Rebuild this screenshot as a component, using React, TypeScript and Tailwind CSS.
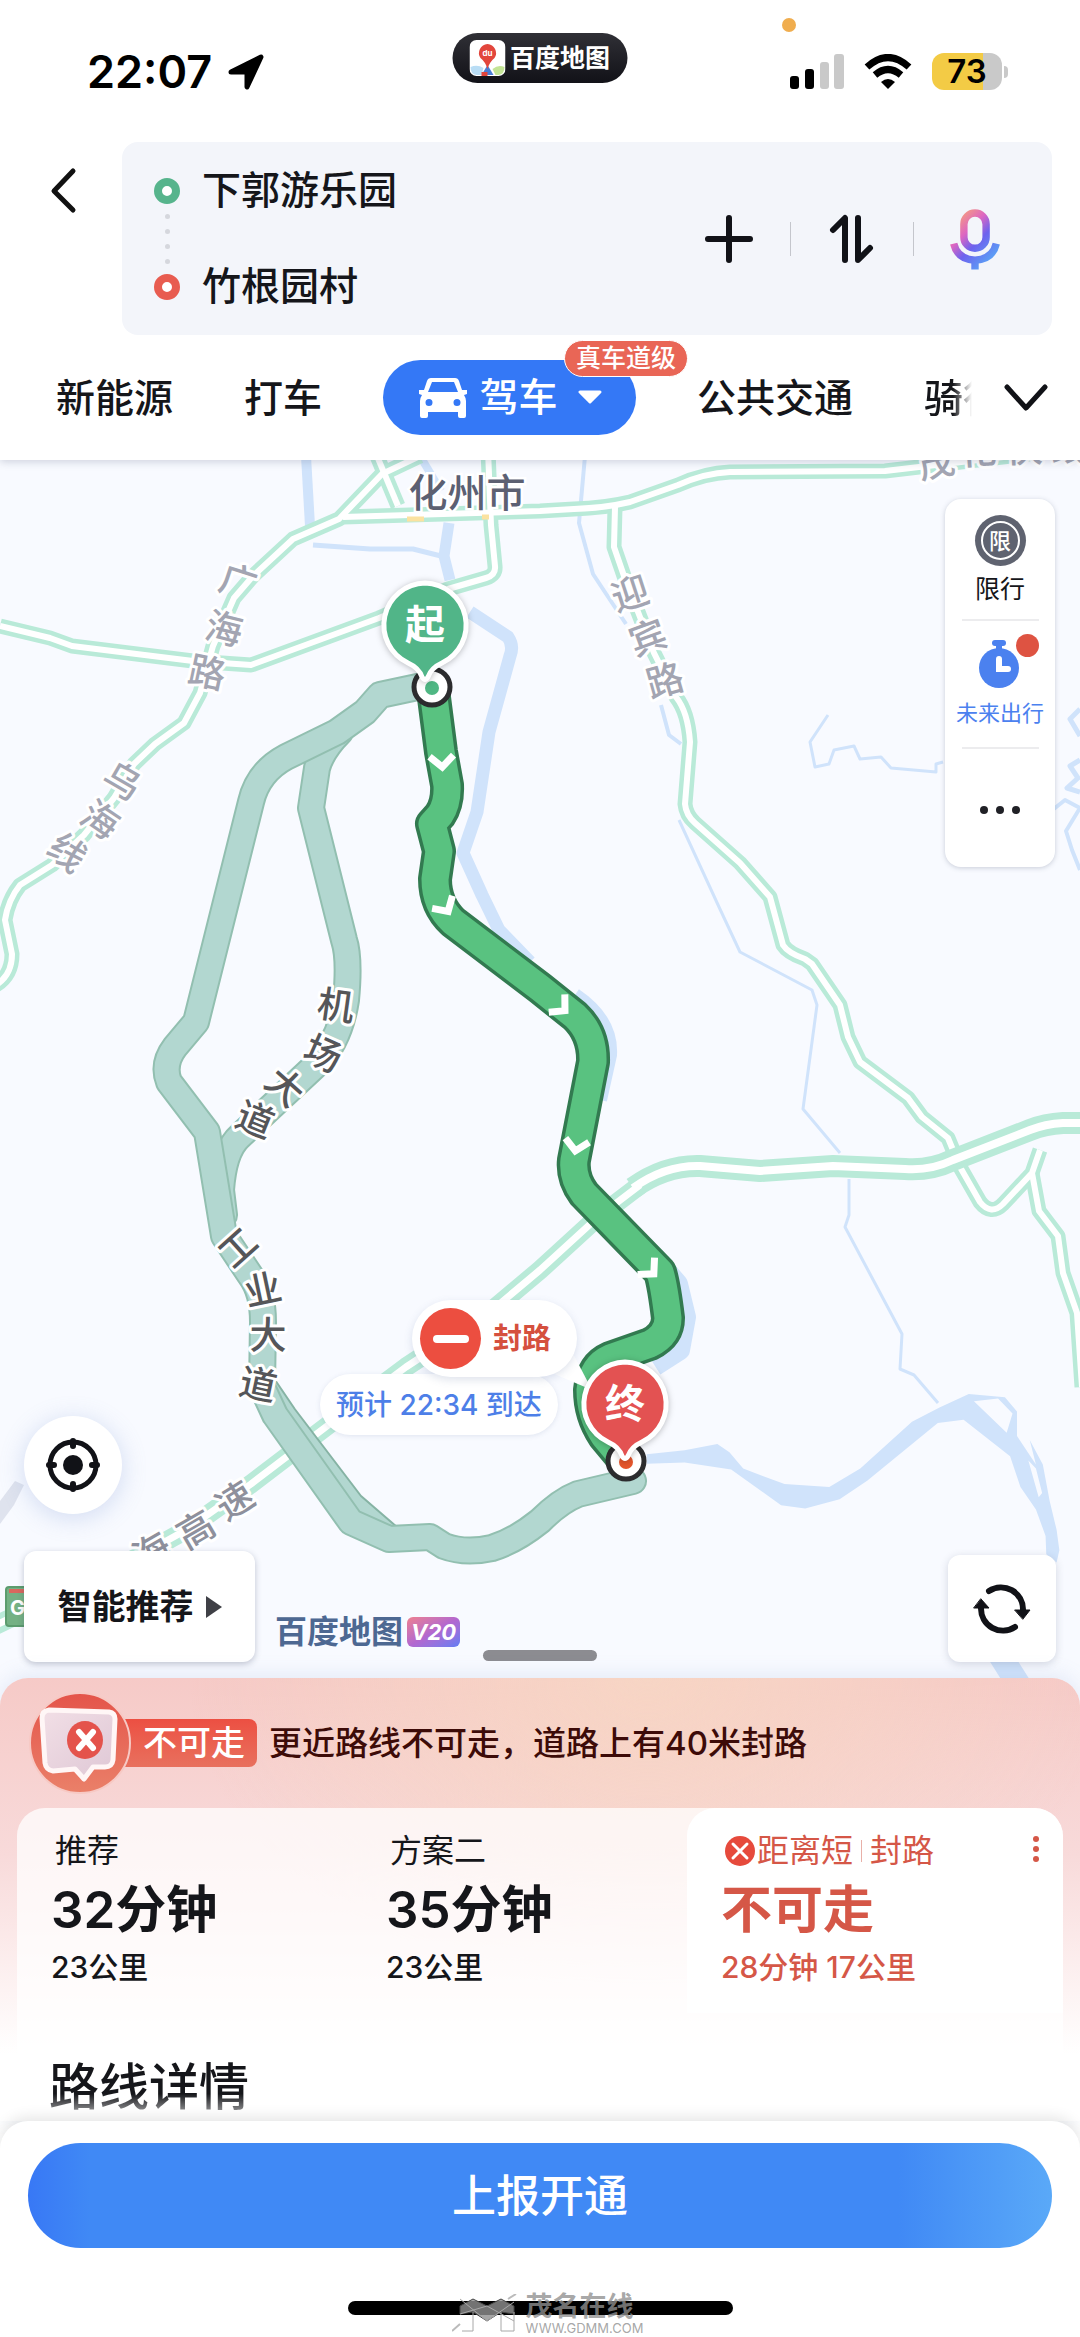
import React from "react";

type Label = { ch: string; x: number; y: number; r: number };

const ROADS = [
  "M0 626 L50 638 L72 646 L193 661 L251 665 L379 618 L448 589 L486 578 Q496 575 495 566 L491 525 L488 450",
  "M420 456 L382 474 L339 519 L293 539 L253 576 L234 598 L213 646 L200 693 L184 723 L155 744 L134 764 L114 798 L84 835 L52 865 L20 885 Q8 900 5 920 L12 954 Q12 975 -4 985",
  "M377 456 L398 506",
  "M343 517 L540 511 L574 509 Q605 508 630 502 L678 485 Q705 473 730 472 L885 471 L919 467 L1080 448",
  "M615 507 L614 547 L624 576 L654 653 L676 697 Q688 712 690 742 L685 804 Q686 815 695 823 L740 863 L770 897 L783 945 Q788 953 805 959 L812 964 L840 1005 L848 1037 L860 1062 L908 1098 L922 1117 L948 1138 L960 1167 L980 1202 Q991 1216 1003 1204 L1032 1173 L1040 1150",
  "M1032 1173 L1039 1211 L1058 1236 L1063 1273 L1077 1313 L1082 1387",
];
const HIGHWAY_WEST = "M640 1185 L598 1217 L540 1270 L490 1312 L406 1367 L331 1423 L251 1484 L186 1530 L100 1578 L34 1607 L-6 1626";
const HIGHWAY_EAST =
  "M1090 1123 L1063 1123 Q1045 1124 1030 1130 L953 1160 Q930 1171 905 1169 L833 1166 L760 1171 L700 1166 Q665 1165 633 1188";

const STREAMS: [string, number][] = [
  ["M306 456 L310 526", 10],
  ["M313 545 L370 549 L413 549 L441 556", 5],
  ["M449 523 L444 556 L450 580", 11],
  ["M420 456 L441 491", 8],
  ["M470 612 L508 637 Q514 646 510 656 L489 732 L477 812 L463 853 L482 895 L499 930 L530 962", 13],
  ["M575 995 Q612 1020 610 1055 L600 1100", 14],
  ["M654 1256 L678 1284 L686 1317 L680 1350 L655 1366", 20],
  ["M585 456 L579 523 L593 574 L626 624", 4],
  ["M661 705 L669 735 L681 744", 4],
  ["M679 820 L719 907 L740 952 L812 990 L817 1005 L803 1109 L840 1153", 3],
  ["M849 1179 L849 1215 L845 1227 L902 1334 L900 1369 L914 1375 L938 1403", 3],
  ["M828 715 L810 742 L815 767 L829 764 L834 750 L854 746 L860 759 L881 757 L891 768 L936 772 L936 764 L943 762", 3],
  ["M1080 709 L1070 719 L1080 736 M1080 760 L1070 766 L1078 778 L1067 788 L1080 792", 5],
  ["M1050 812 L1065 800 L1080 808 L1066 831 L1072 850 L1080 870", 4],
  ["M1000 1655 L1022 1690", 24],
];

const ALT_MAIN =
  "M427 685 L380 695 L365 712 L337 732 L286 757 Q258 772 251 802 L196 1022 L175 1047 Q162 1064 169 1082 L207 1132 L224 1236 L250 1275 Q263 1292 263 1322 L262 1387 L275 1415 L351 1522 L389 1539 L430 1537 L444 1546 Q465 1554 492 1548 Q515 1541 540 1521 Q560 1501 578 1494 L633 1481";
const ALT_SIDE = "M340 732 Q322 750 317 768 L311 808 L344 940 Q350 958 346 1000 Q340 1040 317 1064 L240 1136 Q224 1150 221 1190 L224 1215";
const ALT_INNER = "M266 1388 L285 1416 L352 1504 L389 1536";
const ROUTE =
  "M433 690 L441 752 L447 785 Q448 803 440 815 L432 824 L439 851 L435 879 Q435 905 453 922 L540 988 L575 1016 Q594 1034 593 1062 L574 1160 Q572 1178 584 1194 L660 1272 Q664 1285 668 1318 Q668 1335 650 1344 L610 1358 Q592 1366 590 1390 Q590 1415 604 1436 L624 1460";

const CHEVRONS: [number, number, number][] = [
  [442, 763, -4],
  [446, 908, -32],
  [562, 1008, -48],
  [576, 1147, 10],
  [651, 1271, -45],
];

const MINOR: Label[] = [
  { ch: "广", x: 238, y: 582, r: 18 },
  { ch: "海", x: 224, y: 629, r: 14 },
  { ch: "路", x: 207, y: 673, r: 12 },
  { ch: "乌", x: 122, y: 781, r: 30 },
  { ch: "海", x: 100, y: 820, r: 34 },
  { ch: "线", x: 67, y: 853, r: 38 },
  { ch: "迎", x: 630, y: 594, r: -18 },
  { ch: "宾", x: 648, y: 638, r: -20 },
  { ch: "路", x: 665, y: 681, r: -16 },
  { ch: "茂", x: 936, y: 463, r: -12 },
  { ch: "化", x: 978, y: 451, r: -4 },
  { ch: "快", x: 1024, y: 449, r: -2 },
  { ch: "线", x: 1069, y: 448, r: -2 },
];
const HIGHWAY_NAME: Label[] = [
  { ch: "海", x: 152, y: 1552, r: -30 },
  { ch: "高", x: 196, y: 1530, r: -30 },
  { ch: "速", x: 235, y: 1501, r: -32 },
];
const MAJOR: Label[] = [
  { ch: "机", x: 336, y: 1006, r: 8 },
  { ch: "场", x: 323, y: 1054, r: 24 },
  { ch: "大", x: 285, y: 1087, r: 42 },
  { ch: "道", x: 255, y: 1120, r: 22 },
  { ch: "工", x: 238, y: 1248, r: -42 },
  { ch: "业", x: 263, y: 1290, r: -12 },
  { ch: "大", x: 268, y: 1336, r: 0 },
  { ch: "道", x: 258, y: 1385, r: 12 },
];

function RoadName({ items, color }: { items: Label[]; color: string }) {
  return (
    <g fill={color} stroke="#fff" strokeWidth="6" strokeLinejoin="round" paintOrder="stroke" fontSize="37" fontWeight="500" textAnchor="middle">
      {items.map((l, i) => (
        <text key={i} transform={`translate(${l.x} ${l.y}) rotate(${l.r})`} y="13">
          {l.ch}
        </text>
      ))}
    </g>
  );
}

type PinProps = { x: number; y: number; ringX: number; ringY: number; color: string; text: string; dot: string };

function Pin({ x, y, ringX, ringY, color, text, dot }: PinProps) {
  return (
    <g>
      <circle cx={ringX} cy={ringY} r="18" fill="#fff" stroke="#2c2c2e" strokeWidth="5" />
      <circle cx={ringX} cy={ringY + 1} r="7" fill={dot} />
      <g transform={`translate(${x} ${y})`}>
        <path
          d="M0 -42 A42 42 0 0 1 17 38 Q6 43 3 52 Q0 57 -3 52 Q-6 43 -17 38 A42 42 0 0 1 0 -42Z"
          fill={color}
          stroke="#fff"
          strokeWidth="5"
          className="drop-shadow-[0_1px_3px_rgba(0,0,0,0.25)]"
        />
        <text y="14" fontSize="40" fontWeight="700" fill="#fff" textAnchor="middle">
          {text}
        </text>
      </g>
    </g>
  );
}

function MapCanvas() {
  return (
    <svg viewBox="0 460 1080 1246" preserveAspectRatio="xMidYMin slice" className="absolute inset-0 h-full w-full" aria-label="路线地图" role="img">
      <g fill="none" stroke="#d0e3fb" strokeLinejoin="round">
        {STREAMS.map(([d, w]) => (
          <path key={d} d={d} strokeWidth={w} />
        ))}
      </g>
      <g transform="translate(540 1040) scale(.3444 .4082)">
        <path
          fill="#d0e3fb"
          fillRule="evenodd"
          d="M310 1015 L420 1005 L515 990 L550 1010 L590 1050 L710 1088 L840 1095 L930 1050 L1080 935 L1160 900 L1245 867 L1350 875 L1385 910 L1385 970 L1440 1040 L1422 980 L1460 1040 L1480 1130 L1500 1200 L1508 1250 L1500 1280 L1470 1260 L1468 1215 L1440 1150 L1395 1095 L1365 1020 L1230 930 L1155 938 L950 1080 L870 1125 L770 1148 L700 1140 L555 1052 L420 1035 L310 1038Z M1260 885 L1330 878 L1372 915 L1355 962Z M1418 1030 L1440 1050 L1458 1110 L1448 1120Z"
        />
      </g>
      <path d="M0 1501 L15 1481 L24 1485 L14 1505 L0 1524Z" fill="#dfe3ee" />

      <g fill="none" strokeLinejoin="round">
        {ROADS.map((d) => (
          <path key={d} d={d} stroke="#b9ead8" strokeWidth="15" />
        ))}
        {ROADS.map((d) => (
          <path key={d} d={d} stroke="#fff" strokeWidth="6" />
        ))}
        <path d={HIGHWAY_WEST} stroke="#b9ead8" strokeWidth="19" />
        <path d={HIGHWAY_EAST} stroke="#b9ead8" strokeWidth="22" />
        <path d={HIGHWAY_WEST} stroke="#fff" strokeWidth="7" />
        <path d={HIGHWAY_EAST} stroke="#fff" strokeWidth="8" />
        <path d="M407 519 H424 M482 517 H489" stroke="#fbe2a0" strokeWidth="5" />
      </g>

      <g fill="none" strokeLinejoin="round" strokeLinecap="round">
        <path d={ALT_SIDE} stroke="#92bfb0" strokeWidth="28" />
        <path d={ALT_SIDE} stroke="#b2d7d0" strokeWidth="24" />
        <path d={ALT_INNER} stroke="#86b3a4" strokeWidth="26" />
        <path d={ALT_INNER} stroke="#b2d7d0" strokeWidth="22" />
        <path d={ALT_MAIN} stroke="#92bfb0" strokeWidth="28" />
        <path d={ALT_MAIN} stroke="#b2d7d0" strokeWidth="24" />
        <path d={ROUTE} stroke="#327a50" strokeWidth="34" />
        <path d={ROUTE} stroke="#59c280" strokeWidth="27" />
      </g>
      <g fill="none" stroke="#fff" strokeWidth="7">
        {CHEVRONS.map(([x, y, r]) => (
          <path key={x} transform={`translate(${x} ${y}) rotate(${r})`} d="M-12 -7 L0 4 L12 -7" />
        ))}
      </g>

      <RoadName items={MINOR} color="#a3a5b2" />
      <RoadName items={HIGHWAY_NAME} color="#8e909c" />
      <RoadName items={MAJOR} color="#555659" />
      <text x="467" y="507" fontSize="39" fontWeight="500" textAnchor="middle" fill="#5c6072" stroke="#fff" strokeWidth="5" paintOrder="stroke">
        化州市
      </text>

      <rect x="6" y="1587" width="40" height="39" rx="3" fill="#74b184" stroke="#5c9c6e" strokeWidth="2" />
      <path d="M9 1591 H46" stroke="#d9685e" strokeWidth="4" />
      <text x="10" y="1615" fontSize="20" fontWeight="700" fill="#fff">
        G
      </text>
      <path d="M568 1344 L592 1390 L545 1370Z" fill="#fff" />
      <Pin x={425} y={625} ringX={432} ringY={687} color="#51b588" text="起" dot="#4fb783" />
      <Pin x={625} y={1404} ringX={626} ringY={1461} color="#e35252" text="终" dot="#e5562c" />
    </svg>
  );
}

function StatusBar() {
  return (
    <div className="relative flex h-[142px] items-start justify-between pr-[72px] pl-[87px]">
      <div className="mt-[48px] flex items-center gap-4">
        <span className="text-[45px] leading-[48px] font-semibold text-black">22:07</span>
        <svg viewBox="0 0 36 36" className="size-9" aria-hidden="true">
          <path d="M33 3 L19 33 V18 H3Z" fill="#000" stroke="#000" strokeWidth="5" strokeLinejoin="round" />
        </svg>
      </div>
      <div className="absolute top-[33px] left-1/2 flex h-[50px] w-[175px] -translate-x-1/2 items-center justify-center gap-1 rounded-full bg-linear-to-b from-[#303036] to-[#121218]">
        <svg viewBox="0 0 36 36" className="size-9" aria-hidden="true">
          <rect width="36" height="36" rx="7" fill="#fff" />
          <path d="M1 27 Q8 24 14 28 L12 35 H7 Q1 34 1 27Z" fill="#b9ddf5" />
          <path d="M35 27 Q29 24 23 29 L26 35 H29 Q35 34 35 27Z" fill="#c3e495" />
          <path d="M18 25 L24 35 H12Z" fill="#4a7fd6" />
          <path d="M12 32 H18 V36 H12Z" fill="#e2463c" />
          <path d="M18 4 A9 9 0 0 1 25 18 Q20 22 18 29 Q16 22 11 18 A9 9 0 0 1 18 4Z" fill="#e2463c" />
          <text x="18" y="16" fontSize="8" fontWeight="700" textAnchor="middle" fill="#fff">
            du
          </text>
        </svg>
        <span className="text-[25px] leading-[28px] font-bold text-white">百度地图</span>
      </div>
      <span className="absolute top-[18px] left-[782px] size-[14px] rounded-full bg-[#f0ad4e]" />
      <div className="mt-[53px] flex items-center">
        <svg viewBox="0 0 54 35" className="h-[35px] w-[54px]" aria-hidden="true">
          <rect y="22" width="9" height="13" rx="3" />
          <rect x="15" y="15" width="9" height="20" rx="3" />
          <rect x="30" y="8" width="9" height="27" rx="3" fill="#c9c9c9" />
          <rect x="44" width="10" height="35" rx="3" fill="#c9c9c9" />
        </svg>
        <svg viewBox="0 0 48 36" className="ml-5 h-[36px] w-[48px]" fill="none" stroke="#000" strokeWidth="7" aria-hidden="true">
          <path d="M3 13 Q24 -6 45 13" />
          <path d="M11 21 Q24 10 37 21" />
          <path d="M24 35 L17 28 Q24 22 31 28Z" fill="#000" stroke="none" />
        </svg>
        <div className="ml-5 flex h-[37px] w-[70px] items-center justify-center rounded-xl bg-linear-to-r from-[#f3cb45] from-73% to-[#c9c9c9] to-73% text-[33px] leading-[37px] font-semibold text-black">
          73
        </div>
        <span className="ml-0.5 h-3 w-1 rounded-r-full bg-[#c9c9c9]" />
      </div>
    </div>
  );
}

function RouteFields() {
  return (
    <div className="flex items-start pr-7 pl-[42px]">
      <button aria-label="返回" className="mt-6 flex h-12 w-[80px] items-center">
        <svg viewBox="0 0 44 48" className="h-12 w-11" fill="none" stroke="#111" strokeWidth="5" strokeLinecap="round" strokeLinejoin="round">
          <path d="M31 5 L12 25 L31 44" />
        </svg>
      </button>
      <div className="flex h-[193px] flex-1 items-center rounded-2xl bg-[#f3f5fa] pr-[52px] pl-8">
        <div className="flex flex-col items-center">
          <span className="size-[26px] rounded-full border-8 border-[#56b48c] bg-white" />
          <span className="flex h-[70px] flex-col items-center justify-evenly">
            <i className="size-[5px] rounded-full bg-[#d5d7dd]" />
            <i className="size-[5px] rounded-full bg-[#d5d7dd]" />
            <i className="size-[5px] rounded-full bg-[#d5d7dd]" />
            <i className="size-[5px] rounded-full bg-[#d5d7dd]" />
          </span>
          <span className="size-[26px] rounded-full border-8 border-[#e85c50] bg-white" />
        </div>
        <div className="ml-[22px] flex min-w-0 flex-1 flex-col gap-10">
          <input aria-label="起点" defaultValue="下郭游乐园" className="h-14 w-full bg-transparent text-[39px] font-medium text-[#15161a] outline-none" />
          <input aria-label="终点" defaultValue="竹根园村" className="h-14 w-full bg-transparent text-[39px] font-medium text-[#15161a] outline-none" />
        </div>
        <button aria-label="添加途经点">
          <svg viewBox="0 0 50 50" className="size-[50px]" stroke="#111217" strokeWidth="6" strokeLinecap="round">
            <path d="M25 4 V46 M4 25 H46" />
          </svg>
        </button>
        <span className="mx-9 h-[34px] w-px bg-[#c4c6cc]" />
        <button aria-label="交换起终点">
          <svg viewBox="0 0 50 50" className="size-[50px]" fill="none" stroke="#111217" strokeWidth="6" strokeLinecap="round" strokeLinejoin="round">
            <path d="M6 16 L18 4 V46 M31 4 V46 L43 34" />
          </svg>
        </button>
        <span className="mx-9 h-[34px] w-px bg-[#c4c6cc]" />
        <button aria-label="语音输入">
          <svg viewBox="0 0 54 66" className="h-[66px] w-[50px]" fill="none" stroke="url(#mic)" strokeWidth="8">
            <defs>
              <linearGradient id="mic" x1="4" y1="10" x2="46" y2="52" gradientUnits="userSpaceOnUse">
                <stop offset="0.1" stopColor="#f0908f" />
                <stop offset="0.35" stopColor="#dd66c2" />
                <stop offset="0.62" stopColor="#6d62ee" />
                <stop offset="1" stopColor="#5c9cf5" />
              </linearGradient>
            </defs>
            <rect x="15" y="5" width="24" height="38" rx="12" />
            <path d="M4 38 Q8 55 27 56 Q46 55 50 38 M27 55 V66" />
          </svg>
        </button>
      </div>
    </div>
  );
}

function Tabs() {
  const tab = "text-[39px] leading-[48px] font-medium whitespace-nowrap text-[#15161a]";
  return (
    <nav className="flex h-[125px] items-center pr-[30px] pl-[56px]">
      <button className={tab}>新能源</button>
      <button className={`${tab} ml-[71px]`}>打车</button>
      <button className="relative ml-[61px] flex h-[75px] w-[253px] items-center justify-center rounded-full bg-[#3478f6] text-[39px] font-medium whitespace-nowrap text-white">
        <svg viewBox="0 0 50 42" className="mr-3 h-[42px] w-[50px]" aria-hidden="true">
          <path
            fillRule="evenodd"
            fill="#fff"
            d="M13 1 H37 Q40 1 41 4 L44 13 H49 V17 L46 18 Q48 21 48 24 V39 Q48 41 46 41 H42 Q40 41 40 39 V35 H10 V39 Q10 41 8 41 H4 Q2 41 2 39 V24 Q2 21 4 18 L1 17 V13 H6 L9 4 Q10 1 13 1Z M14 5 L10 15 H40 L36 5Z M11 22 A3.5 3.5 0 1 0 11 29 A3.5 3.5 0 1 0 11 22Z M39 22 A3.5 3.5 0 1 0 39 29 A3.5 3.5 0 1 0 39 22Z"
          />
        </svg>
        驾车
        <svg viewBox="0 0 24 15" className="ml-5 h-[15px] w-6" aria-hidden="true">
          <path d="M2 2 H22 L12 12Z" fill="#fff" stroke="#fff" strokeWidth="3" strokeLinejoin="round" />
        </svg>
        <span className="absolute -top-5 left-[181px] flex h-[37px] items-center rounded-full border border-white bg-[#e96656] px-[11px] text-[25px] leading-[35px] font-medium text-white">
          真车道级
        </span>
      </button>
      <button className={`${tab} ml-[61px]`}>公共交通</button>
      <button className={`${tab} ml-[71px] w-[48px] overflow-hidden mask-r-from-60% mask-r-to-100% text-left`}>骑行</button>
      <button aria-label="展开更多" className="ml-auto">
        <svg viewBox="0 0 48 32" className="h-8 w-12" fill="none" stroke="#111217" strokeWidth="5" strokeLinecap="round" strokeLinejoin="round">
          <path d="M5 5 L24 26 L43 5" />
        </svg>
      </button>
    </nav>
  );
}

function SideTools() {
  return (
    <div className="absolute top-[39px] right-[25px] flex h-[368px] w-[110px] flex-col items-center rounded-2xl bg-white shadow-[0_1px_5px_rgba(60,70,100,0.25)]">
      <button className="flex h-[120px] w-full flex-col items-center pt-4">
        <span className="flex size-[51px] items-center justify-center rounded-full bg-[#5f6370]">
          <span className="flex size-[39px] items-center justify-center rounded-full border-2 border-white text-[22px] leading-none font-medium text-white">限</span>
        </span>
        <span className="mt-[7px] text-[25px] leading-[32px] text-[#15161a]">限行</span>
      </button>
      <hr className="w-[77px] border-t-2 border-[#ececee]" />
      <button className="relative flex h-[126px] w-full flex-col items-center pt-[18px]">
        <svg viewBox="0 0 44 50" className="h-[50px] w-[44px]" aria-hidden="true">
          <rect x="14" y="1" width="14" height="6" rx="3" fill="#4b81ef" />
          <path d="M21 5 V12" stroke="#4b81ef" strokeWidth="6" />
          <circle cx="21" cy="29" r="20" fill="#4b81ef" />
          <path d="M21 20 V30 H30" fill="none" stroke="#fff" strokeWidth="6" strokeLinecap="round" />
        </svg>
        <span className="absolute top-[13px] right-4 size-[23px] rounded-full bg-[#de5342]" />
        <span className="mt-[10px] text-[22px] leading-[28px] whitespace-nowrap text-[#4b81ef]">未来出行</span>
      </button>
      <hr className="w-[77px] border-t-2 border-[#ececee]" />
      <button aria-label="更多" className="flex w-full flex-1 items-center justify-center gap-2 pt-1">
        <i className="size-2 rounded-full bg-[#202126]" />
        <i className="size-2 rounded-full bg-[#202126]" />
        <i className="size-2 rounded-full bg-[#202126]" />
      </button>
    </div>
  );
}

function MapControls() {
  return (
    <div className="absolute inset-x-0 bottom-[44px] flex items-end px-6">
      <div>
        <button aria-label="定位" className="mb-[37px] flex size-[98px] items-center justify-center rounded-full bg-white shadow-[0_4px_24px_rgba(120,150,210,0.3)]">
          <svg viewBox="0 0 56 56" className="size-14" fill="none" stroke="#111217" strokeLinecap="round">
            <circle cx="28" cy="28" r="23" strokeWidth="5" />
            <circle cx="28" cy="28" r="10" fill="#111217" stroke="none" />
            <path d="M28 4 V9 M28 47 V52 M4 28 H9 M47 28 H52" strokeWidth="6" />
          </svg>
        </button>
        <button className="flex h-[111px] w-[231px] items-center justify-center gap-3 rounded-xl bg-white text-[34px] font-bold whitespace-nowrap text-[#15161a] shadow-[0_2px_6px_rgba(60,70,100,0.3)]">
          智能推荐
          <svg viewBox="0 0 16 24" className="h-6 w-4" aria-hidden="true">
            <path d="M0 1 L16 12 L0 23Z" fill="#3f4046" />
          </svg>
        </button>
      </div>
      <div className="mb-[14px] ml-5 flex items-center gap-1">
        <span className="text-[32px] leading-[32px] font-bold text-[#4d6892]">百度地图</span>
        <span className="flex h-[30px] items-center rounded-md bg-linear-to-br from-[#ef7f8d] via-[#b367cf] to-[#5f7cf4] px-1 text-[22px] leading-[30px] font-bold text-white italic">V20</span>
      </div>
      <button aria-label="刷新路线" className="ml-auto flex h-[107px] w-[108px] items-center justify-center rounded-xl bg-white shadow-[0_2px_8px_rgba(60,70,100,0.2)]">
        <svg viewBox="0 0 58 50" className="h-[50px] w-[58px]" fill="none" stroke="#111217" strokeWidth="6" strokeLinecap="round">
          <path d="M16 7 A22 22 0 0 1 50 26" />
          <path d="M42 43 A22 22 0 0 1 8 24" />
          <path d="M42 26 H57 L50 35Z M1 24 H16 L8 15Z" fill="#111217" stroke="#111217" strokeWidth="1" strokeLinejoin="round" />
        </svg>
      </button>
      <span className="absolute bottom-px left-1/2 h-[11px] w-[114px] -translate-x-1/2 rounded-full bg-[#8c8c91]" />
    </div>
  );
}

function Plan({ name, time, distance }: { name: string; time: string; distance: string }) {
  return (
    <button className="flex flex-col items-start pt-[23px] pl-[34px] text-[#15161a]">
      <span className="pl-1 text-[32px] leading-[40px]">{name}</span>
      <span className="mt-[7px] text-[51px] leading-[64px] font-semibold">{time}</span>
      <span className="mt-[5px] text-[30px] leading-[40px] font-medium">{distance}</span>
    </button>
  );
}

function Sheet() {
  return (
    <section className="relative -mt-7 rounded-t-[28px] bg-linear-to-b from-[#f6cac7] via-[#f8dada] via-40% to-white to-85% px-[17px] shadow-[0_-4px_20px_rgba(120,150,200,0.15)]">
      <div className="absolute inset-0 rounded-t-[28px] bg-[radial-gradient(ellipse_at_60%_0%,rgba(247,214,196,0.9),transparent_50%)] mask-b-from-40% mask-b-to-80%" />
      <div className="relative flex h-[130px] items-center pl-3">
        <svg viewBox="0 0 102 102" className="relative z-10 size-[102px]" aria-hidden="true">
          <defs>
            <linearGradient id="alert" x1="0" y1="0" x2="0" y2="1">
              <stop offset="0" stopColor="#e4544a" />
              <stop offset="1" stopColor="#ea8069" />
            </linearGradient>
            <linearGradient id="bubble" x1="0" y1="0" x2="1" y2="1">
              <stop offset="0" stopColor="#f2dfe6" />
              <stop offset="1" stopColor="#dec7d5" />
            </linearGradient>
          </defs>
          <circle cx="51" cy="51" r="50" fill="url(#alert)" stroke="#f7c9c4" strokeWidth="2" />
          <path d="M20 18 L80 20 Q86 21 86 27 L84 68 Q83 75 76 75 L64 75 L55 87 L46 77 L24 79 Q17 78 16 71 L13 26 Q13 19 20 18Z" fill="url(#bubble)" stroke="#fff6f6" strokeWidth="5" strokeLinejoin="round" />
          <ellipse cx="56" cy="48" rx="18" ry="19" fill="#e4534c" />
          <path d="M50 40 L64 56 M64 40 L50 56" stroke="#fff" strokeWidth="6" strokeLinecap="round" />
        </svg>
        <span className="-ml-3 flex h-[48px] items-center rounded-r-lg bg-linear-to-b from-[#ec4f42] to-[#e8705e] pr-3 pl-6 text-[34px] leading-[48px] font-medium whitespace-nowrap text-white">不可走</span>
        <span className="ml-3 text-[33px] leading-[48px] font-medium whitespace-nowrap text-[#3d0b08]">更近路线不可走，道路上有40米封路</span>
      </div>
      <div className="relative h-[313px] overflow-hidden rounded-t-[28px] bg-white/75">
        <div className="grid h-[205px] grid-cols-[335fr_335fr_376fr]">
          <Plan name="推荐" time="32分钟" distance="23公里" />
          <Plan name="方案二" time="35分钟" distance="23公里" />
          <div className="relative rounded-t-[28px] bg-white">
            <button className="flex flex-col items-start pt-[23px] pl-[34px] text-[#d55747]">
              <span className="flex items-center pl-1 text-[32px] leading-[40px]">
                <svg viewBox="0 0 30 30" className="mr-0.5 size-[30px]" aria-hidden="true">
                  <circle cx="15" cy="15" r="15" fill="#e64a3c" />
                  <path d="M8 8 L22 22 M22 8 L8 22" stroke="#fff" strokeWidth="3" strokeLinecap="round" />
                </svg>
                距离短
                <i className="mx-2 h-[22px] w-px bg-[#e8b0a8]" />
                封路
              </span>
              <span className="mt-[7px] text-[51px] leading-[64px] font-semibold">不可走</span>
              <span className="mt-[5px] text-[30px] leading-[40px] font-medium">28分钟 17公里</span>
            </button>
            <button aria-label="方案操作" className="absolute top-7 right-6 flex flex-col gap-1">
              <i className="size-[6px] rounded-full bg-[#d55747]" />
              <i className="size-[6px] rounded-full bg-[#d55747]" />
              <i className="size-[6px] rounded-full bg-[#d55747]" />
            </button>
          </div>
        </div>
        <h2 className="mt-10 bg-linear-to-b from-[#15161a] from-60% to-[#15161a]/40 to-90% bg-clip-text pl-8 text-[50px] leading-[68px] font-medium text-transparent">路线详情</h2>
      </div>
    </section>
  );
}

function Footer() {
  return (
    <footer className="relative flex h-[216px] flex-col items-center rounded-t-[28px] bg-white px-7 pt-[22px] shadow-[0_-4px_14px_rgba(0,0,0,0.1)]">
      <button className="h-[105px] w-full rounded-full bg-[linear-gradient(to_right,#3878f5,#4089f5_6%,#4089f5_85%,#5aa9f8)] text-[44px] font-medium text-white">
        上报开通
      </button>
      <div className="relative mt-[53px] h-[14px] w-[385px] rounded-full bg-black">
        <div className="absolute -top-2 left-[104px] flex items-center gap-2 text-[#909090]/80">
          <svg viewBox="0 0 66 40" className="h-10 w-[66px]" fill="currentColor" stroke="#444" strokeWidth="1">
            <path d="M8 12 L21 5 L35 12 L49 5 L62 12 V20 L49 18 L35 27 L21 18 L8 20Z" />
            <path d="M8 5 L35 27 M35 12 L8 20 M35 12 L62 27 M62 8 L35 27 M21 18 V37 H10 M49 18 V37 H62 M62 18 V37" fill="none" stroke="#a8a8a8" />
            <path d="M0 37 L8 30 M56 5 L64 0" fill="none" stroke="#bbb" strokeWidth="2" />
          </svg>
          <div className="flex flex-col whitespace-nowrap">
            <span className="text-[27px] leading-[28px] font-bold">茂名在线</span>
            <span className="text-[13px] leading-[14px]">WWW.GDMM.COM</span>
          </div>
        </div>
      </div>
    </footer>
  );
}

export default function App() {
  return (
    <main className="flex min-h-screen flex-col overflow-hidden bg-white font-['Inter','Noto_Sans_CJK_SC',sans-serif]">
      <header className="relative z-10 bg-white shadow-[0_2px_8px_rgba(60,70,100,0.22)]">
        <StatusBar />
        <RouteFields />
        <Tabs />
      </header>
      <div className="relative min-h-[1000px] flex-1 overflow-hidden bg-[#f8faff]">
        <MapCanvas />
        <div className="absolute top-[914px] left-[320px] flex h-[61px] items-center rounded-full bg-white px-4 text-[28px] font-medium whitespace-nowrap text-[#4d7fe8] shadow-[0_1px_5px_rgba(80,100,150,0.15)]">
          预计 22:34 到达
        </div>
        <div className="absolute top-[840px] left-[412px] flex h-[77px] w-[165px] items-center gap-3 rounded-full bg-white pl-2 text-[29px] font-bold whitespace-nowrap text-[#d5503e] shadow-[0_3px_8px_rgba(80,100,150,0.18)]">
          <span className="flex size-[61px] items-center justify-center rounded-full bg-[#ec4e40]">
            <i className="h-2 w-9 rounded-full bg-white" />
          </span>
          封路
        </div>
        <SideTools />
        <MapControls />
      </div>
      <Sheet />
      <Footer />
    </main>
  );
}
